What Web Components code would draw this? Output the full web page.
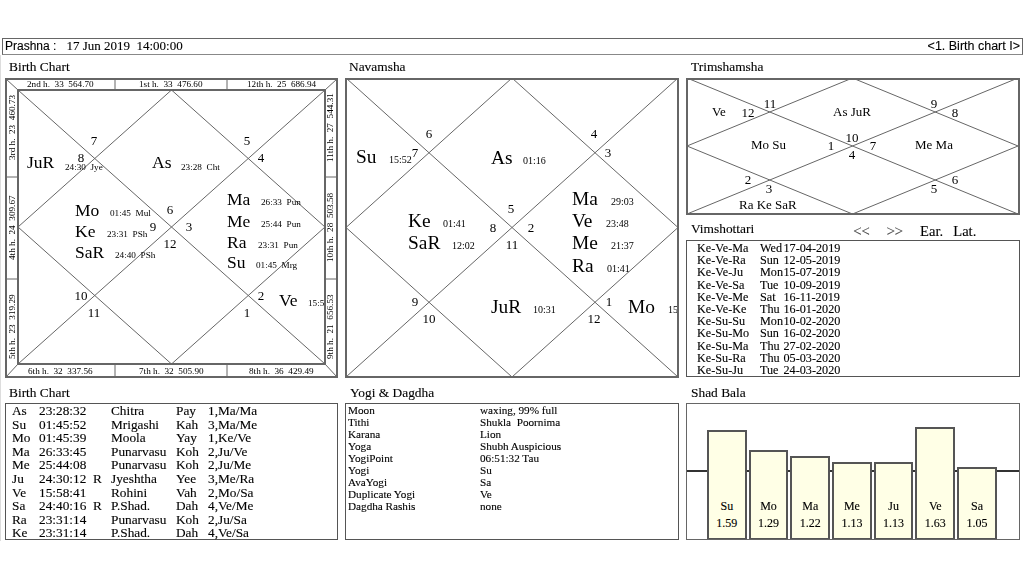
<!DOCTYPE html>
<html>
<head>
<meta charset="utf-8">
<title>Prashna</title>
<style>
	html, body { margin: 0; padding: 0; background: #fff; }
	body { font-family: "Liberation Serif", serif; color: #000; width: 1024px; height: 576px; overflow: hidden; }
	.stack { display: flex; flex-direction: column; }
</style>
</head>
<body>
<astro-page>
	<title-bar slot="header">
		<span slot="left">Prashna :</span>
		<span slot="date">17 Jun 2019  14:00:00</span>
		<span slot="right">&lt;1. Birth chart I&gt;</span>
	</title-bar>

	<chart-panel pad="4" height="23" left="4">
		<span slot="title">Birth Chart</span>
		<kundali-chart key="birth"></kundali-chart>
	</chart-panel>
	<chart-panel pad="4" height="23" left="4">
		<span slot="title">Navamsha</span>
		<kundali-chart key="navamsha"></kundali-chart>
	</chart-panel>
	<div class="stack">
		<chart-panel pad="4" height="23">
			<span slot="title">Trimshamsha</span>
			<kundali-chart key="trimshamsha"></kundali-chart>
		</chart-panel>
		<chart-panel pad="6" height="25">
			<span slot="title">Vimshottari</span>
			<dasha-nav slot="tools"></dasha-nav>
			<text-table key="dasha" cols="63px 23.5px auto" pitch="12.2" size="12.2" left="10" top="1"></text-table>
		</chart-panel>
	</div>

	<chart-panel pad="7" height="25" left="4">
		<span slot="title">Birth Chart</span>
		<text-table key="planets" cols="27px 54px 18px 65px 32px auto" pitch="13.6" size="13.3" left="6"></text-table>
	</chart-panel>
	<chart-panel pad="7" height="25">
		<span slot="title">Yogi &amp; Dagdha</span>
		<text-table key="yogi" cols="132px auto" pitch="12" size="11.2" left="2"></text-table>
	</chart-panel>
	<chart-panel pad="7" height="25">
		<span slot="title">Shad Bala</span>
		<bala-chart>
			<bala-bar height="109"><span>Su</span><span>1.59</span></bala-bar>
			<bala-bar height="89"><span>Mo</span><span>1.29</span></bala-bar>
			<bala-bar height="83"><span>Ma</span><span>1.22</span></bala-bar>
			<bala-bar height="77"><span>Me</span><span>1.13</span></bala-bar>
			<bala-bar height="77"><span>Ju</span><span>1.13</span></bala-bar>
			<bala-bar height="112"><span>Ve</span><span>1.63</span></bala-bar>
			<bala-bar height="72"><span>Sa</span><span>1.05</span></bala-bar>
		</bala-chart>
	</chart-panel>
</astro-page>

<script>
// chart data is in page coordinates, the svg viewBox takes care of the offset
const CHARTS = {
	birth: {
		box: [5, 78, 333, 300],
		inner: [18, 90, 325, 364],
		planetSize: 17.5, degSize: 9.2, numSize: 13,
		nums: [[7,94,145],[8,81,162],[5,247,145],[4,261,162],[6,170,214],[9,153,231],[3,189,231],[12,170,248],[10,81,300],[11,94,317],[2,261,300],[1,247,317]],
		planets: [
			["JuR",27,168],["As",152,168],["Ma",227,205],["Me",227,227],["Ra",227,248],["Su",227,268],
			["Ve",279,306],["Mo",75,216],["Ke",75,237],["SaR",75,258]
		],
		degs: [
			["24:30  Jye",65,170],["23:28  Cht",181,170],["26:33  Pun",261,205],["25:44  Pun",261,227],["23:31  Pun",258,248],
			["01:45  Mrg",256,268],["15:58",308,306],["01:45  Mul",110,216],["23:31  PSh",107,237],["24:40  PSh",115,258]
		],
		top: [["2nd h.  33  564.70",27],["1st h.  33  476.60",139],["12th h.  25  686.94",247]],
		bottom: [["6th h.  32  337.56",28],["7th h.  32  505.90",139],["8th h.  36  429.49",249]],
		left: [["3rd h.  23  460.73",160],["4th h.  24  309.67",260],["5th h.  23  319.29",359]],
		right: [["11th h.  27  544.31",162],["10th h.  28  503.58",262],["9th h.  21  656.53",359]]
	},
	navamsha: {
		box: [345, 78, 334, 300],
		inner: [346, 78, 678, 377],
		planetSize: 19.4, degSize: 10, numSize: 13,
		nums: [[6,429,138],[7,415,157],[4,594,138],[3,608,157],[5,511,213],[8,493,232],[2,531,232],[11,512,249],[9,415,306],[10,429,323],[1,609,306],[12,594,323]],
		planets: [
			["Su",356,163],["As",491,164],["Ma",572,205],["Ve",572,227],["Me",572,249],["Ra",572,272],
			["Ke",408,227],["SaR",408,249],["JuR",491,313],["Mo",628,313]
		],
		degs: [
			["15:52",389,163],["01:16",523,164],["29:03",611,205],["23:48",606,227],["21:37",611,249],
			["01:41",607,272],["01:41",443,227],["12:02",452,249],["10:31",533,313],["15:58",668,313]
		]
	},
	trimshamsha: {
		box: [686, 78, 334, 137],
		inner: [687, 78, 1018, 214],
		planetSize: 13, degSize: 10, numSize: 13,
		nums: [[12,748,117],[11,770,108],[9,934,108],[8,955,117],[1,831,150],[10,852,142],[7,873,150],[4,852,159],[2,748,184],[3,769,193],[5,934,193],[6,955,184]],
		planets: [["Ve",712,116],["As JuR",833,116],["Mo Su",751,149],["Me Ma",915,149],["Ra Ke SaR",739,209]],
		degs: []
	}
};

const TABLES = {
	dasha: [
		["Ke-Ve-Ma","Wed","17-04-2019"],["Ke-Ve-Ra","Sun","12-05-2019"],["Ke-Ve-Ju","Mon","15-07-2019"],
		["Ke-Ve-Sa","Tue","10-09-2019"],["Ke-Ve-Me","Sat","16-11-2019"],["Ke-Ve-Ke","Thu","16-01-2020"],
		["Ke-Su-Su","Mon","10-02-2020"],["Ke-Su-Mo","Sun","16-02-2020"],["Ke-Su-Ma","Thu","27-02-2020"],
		["Ke-Su-Ra","Thu","05-03-2020"],["Ke-Su-Ju","Tue","24-03-2020"]
	],
	planets: [
		["As","23:28:32","","Chitra","Pay","1,Ma/Ma"],["Su","01:45:52","","Mrigashi","Kah","3,Ma/Me"],
		["Mo","01:45:39","","Moola","Yay","1,Ke/Ve"],["Ma","26:33:45","","Punarvasu","Koh","2,Ju/Ve"],
		["Me","25:44:08","","Punarvasu","Koh","2,Ju/Me"],["Ju","24:30:12","R","Jyeshtha","Yee","3,Me/Ra"],
		["Ve","15:58:41","","Rohini","Vah","2,Mo/Sa"],["Sa","24:40:16","R","P.Shad.","Dah","4,Ve/Me"],
		["Ra","23:31:14","","Punarvasu","Koh","2,Ju/Sa"],["Ke","23:31:14","","P.Shad.","Dah","4,Ve/Sa"]
	],
	yogi: [
		["Moon","waxing, 99% full"],["Tithi","Shukla  Poornima"],["Karana","Lion"],["Yoga","Shubh Auspicious"],
		["YogiPoint","06:51:32 Tau"],["Yogi","Su"],["AvaYogi","Sa"],["Duplicate Yogi","Ve"],["Dagdha Rashis","none"]
	]
};

class AstroPage extends HTMLElement {
	constructor () {
		super();
		this.attachShadow({ mode: "open" }).innerHTML = `
			<style>
				:host {
					display: block; padding: 38px 1px 0 2px; box-sizing: border-box; width: 1024px;
					filter: blur(0.3px); -webkit-text-stroke: 0.12px #000;
				}
				#grid {
					display: grid;
					grid-template-columns: 333px 334px 334px;
					grid-template-rows: 323px 163px;
					column-gap: 7px;
					margin-left: -2px;
					padding-left: 4px;
					border-left: 1px solid #ddd;
				}
			</style>
			<slot name="header"></slot>
			<div id="grid"><slot></slot></div>
		`;
	}
}

class TitleBar extends HTMLElement {
	constructor () {
		super();
		this.attachShadow({ mode: "open" }).innerHTML = `
			<style>
				:host {
					display: flex; align-items: center; box-sizing: border-box; height: 17px; padding: 0 2px 1px 2px;
					border: 1px solid #666; border-bottom-color: #888; font: 12px "Liberation Sans", sans-serif;
				}
				#date { font: 13px "Liberation Serif", serif; white-space: pre; margin-left: 10px; }
				#right { margin-left: auto; font-size: 12.5px; }
			</style>
			<slot name="left"></slot>
			<span id="date"><slot name="date"></slot></span>
			<span id="right"><slot name="right"></slot></span>
		`;
	}
}

class ChartPanel extends HTMLElement {
	constructor () {
		super();
		const pad = this.getAttribute("pad");
		const height = this.getAttribute("height");
		const left = this.getAttribute("left") || 5;
		this.attachShadow({ mode: "open" }).innerHTML = `
			<style>
				:host { display: block; }
				#head { display: flex; box-sizing: border-box; height: ${height}px; padding: ${pad}px 0 0 ${left}px; font-size: 13.4px; line-height: 16px; }
			</style>
			<div id="head"><slot name="title"></slot><slot name="tools"></slot></div>
			<slot></slot>
		`;
	}
}

class DashaNav extends HTMLElement {
	constructor () {
		super();
		this.attachShadow({ mode: "open" }).innerHTML = `
			<style>
				:host { display: flex; position: relative; top: 2px; margin-left: 99px; font-size: 14.6px; line-height: 16px; }
				span { margin-right: 17px; }
				.arrow { color: #555; }
				#ear { margin-right: 10px; }
			</style>
			<span class="arrow">&lt;&lt;</span>
			<span class="arrow">&gt;&gt;</span>
			<span id="ear">Ear.</span>
			<span>Lat.</span>
		`;
	}
}

class KundaliChart extends HTMLElement {
	constructor () {
		super();
		const c = CHARTS[this.getAttribute("key")];
		const [bx, by, bw, bh] = c.box;
		const [l, t, r, b] = c.inner;
		const mx = (l + r) / 2, my = (t + b) / 2;
		const text = (s, x, y, cls, extra = "") => `<text x="${x}" y="${y}" class="${cls}" ${extra}>${s}</text>`;
		let out = `
			<g class="line">
				<path d="M${l} ${t}L${r} ${b}M${r} ${t}L${l} ${b}M${mx} ${t}L${r} ${my}L${mx} ${b}L${l} ${my}Z"/>
			</g>`;
		for (const [n, x, y] of c.nums) out += text(n, x, y, "num");
		for (const [s, x, y] of c.planets) out += text(s, x, y, "planet");
		for (const [s, x, y] of c.degs) out += text(s, x, y, "deg");
		if (c.top) {
			// house strips sit over the chart, they cut off anything running out of it
			const ox = bx + 1, oy = by + 1, ox2 = bx + bw - 1, oy2 = by + bh - 1;
			out += `
				<path class="strip" d="M${ox} ${oy}H${ox2}V${oy2}H${ox}ZM${l} ${t}V${b}H${r}V${t}Z" fill-rule="evenodd"/>
				<g class="line">
					<path d="M${ox} ${oy}L${l} ${t}M${ox2} ${oy}L${r} ${t}M${ox} ${oy2}L${l} ${b}M${ox2} ${oy2}L${r} ${b}"/>
					<path d="M115 ${oy}V${t}M227 ${oy}V${t}M115 ${b}V${oy2}M227 ${b}V${oy2}M${ox} 177H${l}M${ox} 279H${l}M${r} 177H${ox2}M${r} 279H${ox2}"/>
				</g>
				<rect class="frame" x="${l}" y="${t}" width="${r - l}" height="${b - t}"/>`;
			for (const [s, x] of c.top) out += text(s, x, 87, "deg");
			for (const [s, x] of c.bottom) out += text(s, x, 374, "deg");
			for (const [s, y] of c.left) out += text(s, 15, y, "deg", `transform="rotate(-90 15 ${y})"`);
			for (const [s, y] of c.right) out += text(s, 333, y, "deg", `transform="rotate(-90 333 ${y})"`);
		}
		out += `<rect class="frame" x="${bx + 1}" y="${by + 1}" width="${bw - 2}" height="${bh - 2}"/>`;
		this.attachShadow({ mode: "open" }).innerHTML = `
			<style>
				:host { display: block; width: ${bw}px; height: ${bh}px; }
				svg { display: block; overflow: hidden; }
				text { font-family: "Liberation Serif", serif; fill: #000; white-space: pre; }
				.num { font-size: ${c.numSize}px; text-anchor: middle; }
				.planet { font-size: ${c.planetSize}px; }
				.deg { font-size: ${c.degSize}px; }
				.line path { fill: none; stroke: #666; stroke-width: 1; }
				.strip { fill: #fff; }
				.frame { fill: none; stroke: #666; stroke-width: 2; }
			</style>
			<svg width="${bw}" height="${bh}" viewBox="${bx} ${by} ${bw} ${bh}">${out}</svg>
		`;
	}
}

class TextTable extends HTMLElement {
	constructor () {
		super();
		const rows = TABLES[this.getAttribute("key")];
		const cells = rows.map(row => row.map(cell => `<span>${cell}</span>`).join("")).join("");
		this.attachShadow({ mode: "open" }).innerHTML = `
			<style>
				:host {
					display: grid; box-sizing: border-box; height: 137px; border: 1px solid #555;
					grid-template-columns: ${this.getAttribute("cols")};
					grid-auto-rows: ${this.getAttribute("pitch")}px;
					align-content: start;
					padding: ${this.getAttribute("top") || 0}px 0 0 ${this.getAttribute("left")}px;
					font-size: ${this.getAttribute("size")}px;
					line-height: ${this.getAttribute("pitch")}px;
				}
				span { white-space: pre; }
			</style>
			${cells}
		`;
	}
}

class BalaChart extends HTMLElement {
	constructor () {
		super();
		this.attachShadow({ mode: "open" }).innerHTML = `
			<style>
				:host {
					display: flex; position: relative; box-sizing: border-box; height: 137px;
					border: 1px solid #666; padding-left: 20px; gap: 2px; align-items: flex-end;
				}
				#mean { position: absolute; left: 0; right: 0; top: 66px; height: 2px; background: #333; }
			</style>
			<div id="mean"></div>
			<slot></slot>
		`;
	}
}

class BalaBar extends HTMLElement {
	constructor () {
		super();
		this.attachShadow({ mode: "open" }).innerHTML = `
			<style>
				:host {
					display: flex; flex-direction: column; align-items: center; justify-content: flex-end;
					position: relative; box-sizing: border-box; width: 39.7px; height: ${this.getAttribute("height")}px;
					background: #ffffe6; border: 2px solid #555; border-bottom-width: 1px;
					padding-bottom: 8px; gap: 3px; font-size: 12px; line-height: 14px;
				}
				::slotted(span) { display: block; }
			</style>
			<slot></slot>
		`;
	}
}

customElements.define("title-bar", TitleBar);
customElements.define("chart-panel", ChartPanel);
customElements.define("dasha-nav", DashaNav);
customElements.define("kundali-chart", KundaliChart);
customElements.define("text-table", TextTable);
customElements.define("bala-chart", BalaChart);
customElements.define("bala-bar", BalaBar);
customElements.define("astro-page", AstroPage);
</script>
</body>
</html>
